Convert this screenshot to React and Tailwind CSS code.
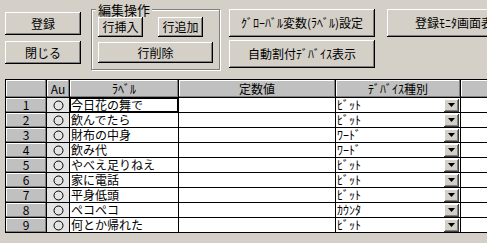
const rows = [
  ['今日花の舞で', 'ﾋﾞｯﾄ'],
  ['飲んでたら', 'ﾋﾞｯﾄ'],
  ['財布の中身', 'ﾜｰﾄﾞ'],
  ['飲み代', 'ﾜｰﾄﾞ'],
  ['やべえ足りねえ', 'ﾋﾞｯﾄ'],
  ['家に電話', 'ﾋﾞｯﾄ'],
  ['平身低頭', 'ﾋﾞｯﾄ'],
  ['ペコペコ', 'ｶｳﾝﾀ'],
  ['何とか帰れた', 'ﾋﾞｯﾄ'],
];

const btn =
  'bg-[#d4d0c8] shadow-[inset_-1px_-1px_#000,inset_1px_1px_#fff,inset_-2px_-2px_#808080] flex items-center justify-center whitespace-nowrap text-[12px] leading-[14px] text-black';
const raised = 'bg-[#c0c0c0] shadow-[inset_-1px_-1px_#808080,inset_1px_1px_#fff]';

function Circle() {
  return (
    <svg width="11" height="11" viewBox="0 0 11 11">
      <circle cx="5.5" cy="5.5" r="4.5" fill="none" stroke="#000" strokeWidth="1" />
    </svg>
  );
}

function DropButton() {
  return (
    <div className="w-[15px] h-[13px] shrink-0 bg-[#d4d0c8] shadow-[inset_-1px_-1px_#404040,inset_1px_1px_#fff,inset_-2px_-2px_#808080] flex items-center justify-center">
      <svg width="7" height="4" viewBox="0 0 7 4">
        <path d="M0 0h7L3.5 4z" fill="#000" />
      </svg>
    </div>
  );
}

export default function App() {
  return (
    <div
      className="w-[487px] h-[243px] overflow-hidden bg-[#d4d0c8] text-black text-[12px] leading-[14px]"
      style={{ fontFamily: '"Noto Sans CJK JP", "MS UI Gothic", sans-serif' }}
    >
      {/* toolbar area */}
      <div className="flex h-[79px]">
        <div className="ml-[5px] w-[76px] shrink-0 pt-[12px] flex flex-col gap-[6px]">
          <div className={`${btn} h-[23px]`}>登録</div>
          <div className={`${btn} h-[23px]`}>閉じる</div>
        </div>

        <div className="ml-[10px] mt-[9px] w-[129px] h-[61px] shrink-0 relative border border-[#808080] shadow-[inset_1px_1px_#fff,1px_1px_#fff] pl-[6px] pt-[7px]">
          <span className="absolute left-[4px] -top-[7px] px-[2px] bg-[#d4d0c8] text-[13px] leading-[13px]">編集操作</span>
          <div className="flex gap-[15px]">
            <div className={`${btn} w-[45px] h-[20px]`}>行挿入</div>
            <div className={`${btn} w-[45px] h-[20px]`}>行追加</div>
          </div>
          <div className={`${btn} w-[115px] h-[21px] mt-[5px]`}>行削除</div>
        </div>

        <div className="ml-[9px] w-[146px] shrink-0 pt-[9px] flex flex-col gap-[3px]">
          <div className={`${btn} h-[28px]`}>ｸﾞﾛｰﾊﾞﾙ変数(ﾗﾍﾞﾙ)設定</div>
          <div className={`${btn} h-[28px]`}>自動割付ﾃﾞﾊﾞｲｽ表示</div>
        </div>

        <div className="ml-[12px] pt-[9px] shrink-0">
          <div className={`${btn} w-[146px] h-[28px]`}>登録ﾓﾆﾀ画面表示</div>
        </div>
      </div>

      {/* grid */}
      <div className="ml-[5px] w-max border border-black bg-black grid grid-cols-[40px_22px_108px_156px_124px_200px] gap-px leading-[12px]">
        <div className={`${raised} h-[17px]`} />
        <div className={`${raised} h-[17px] flex items-center justify-center`}>Au</div>
        <div className={`${raised} h-[17px] flex items-center justify-center`}>ﾗﾍﾞﾙ</div>
        <div className={`${raised} h-[17px] flex items-center justify-center`}>定数値</div>
        <div className={`${raised} h-[17px] flex items-center justify-center`}>ﾃﾞﾊﾞｲｽ種別</div>
        <div className={`${raised} h-[17px]`} />

        {rows.map(([label, kind], i) => (
          <div key={i} className="contents">
            <div className={`${raised} h-[14px] flex items-center justify-center`}>{i + 1}</div>
            <div className="h-[14px] bg-[#e4e4e4] flex items-center justify-center">
              <Circle />
            </div>
            <div
              className={`h-[14px] bg-white pl-px flex items-center ${
                i === 0 ? 'shadow-[inset_0_0_0_1px_#000]' : ''
              }`}
            >
              {label}
            </div>
            <div className="h-[14px] bg-white" />
            <div className="h-[14px] bg-white pl-px pr-px flex items-center justify-between">
              <span>{kind}</span>
              <DropButton />
            </div>
            <div className="h-[14px] bg-white" />
          </div>
        ))}
      </div>
    </div>
  );
}
